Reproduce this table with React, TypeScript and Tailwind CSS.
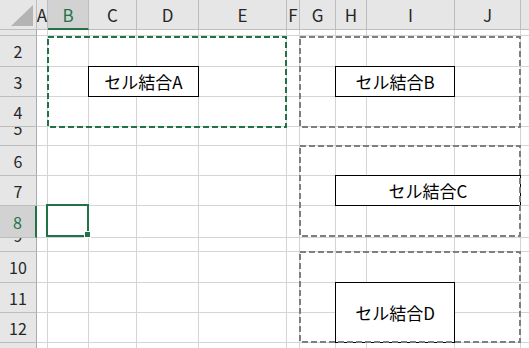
const font = "font-['Noto_Sans_CJK_JP',sans-serif]";

const columns = ["", "A", "B", "C", "D", "E", "F", "G", "H", "I", "J", ""];

// row number, label offset for rows that are too short to show the number
const rows: { n: number; label: string; offset?: string }[] = [
  { n: 1, label: "" },
  { n: 2, label: "2" },
  { n: 3, label: "3" },
  { n: 4, label: "4" },
  { n: 5, label: "5", offset: "-mt-[7px]" },
  { n: 6, label: "6" },
  { n: 7, label: "7" },
  { n: 8, label: "8" },
  { n: 9, label: "9", offset: "-mt-[11px]" },
  { n: 10, label: "10" },
  { n: 11, label: "11" },
  { n: 12, label: "12" },
  { n: 13, label: "13" }
];

type Merge = { row: number; col: number; rows: number; cols: number; text: string; span: string };

const merges: Merge[] = [
  { row: 3, col: 3, rows: 1, cols: 2, text: "セル結合A", span: "col-span-2" },
  { row: 3, col: 8, rows: 1, cols: 2, text: "セル結合B", span: "col-span-2" },
  { row: 7, col: 8, rows: 1, cols: 3, text: "セル結合C", span: "col-span-3" },
  { row: 11, col: 8, rows: 2, cols: 2, text: "セル結合D", span: "col-span-2 row-span-2" }
];

function mergeAt(row: number, col: number) {
  return merges.find((m) => m.row === row && m.col === col);
}

function covered(row: number, col: number) {
  return merges.some(
    (m) => row >= m.row && row < m.row + m.rows && col >= m.col && col < m.col + m.cols
  );
}

function HeaderRow() {
  return (
    <>
      <div className="relative border-b border-r border-[#bdbdbd] bg-[#e6e6e6]">
        <svg className="absolute left-0 top-0" width="36" height="29">
          <polygon points="33,5 33,26 11,26" fill="#b4b4b4" />
        </svg>
      </div>
      {columns.slice(1).map((c, i) => {
        const selected = c === "B";
        return (
          <div
            key={i}
            className={
              selected
                ? "flex items-center justify-center border-b-2 border-r border-b-[#217346] border-r-[#bdbdbd] bg-[#d2d2d2] text-[17px] text-[#217346]"
                : "flex items-center justify-center border-b border-r border-[#bdbdbd] bg-[#e6e6e6] text-[17px] text-[#262626]"
            }
          >
            <span className="leading-none">{c}</span>
          </div>
        );
      })}
    </>
  );
}

function RowHeader({ n, label, offset }: { n: number; label: string; offset?: string }) {
  const selected = n === 8;
  return (
    <div
      className={
        (selected
          ? "border-r-2 border-b border-r-[#217346] border-b-[#bdbdbd] bg-[#d2d2d2] text-[#217346] "
          : "border-b border-r border-b-[#bdbdbd] border-r-[#ababab] bg-[#e6e6e6] text-[#262626] ") +
        (offset ? "flex items-start justify-center overflow-hidden text-[16px]" : "flex items-center justify-center overflow-hidden text-[16px]")
      }
    >
      <span className={"leading-[16px] " + (offset ?? "")}>{label}</span>
    </div>
  );
}

function Cell({ row, col }: { row: number; col: number }) {
  const m = mergeAt(row, col);
  if (m) {
    return (
      <div
        className={`${m.span} relative z-10 -ml-px -mt-px flex items-center justify-center border border-black bg-white text-[17px] text-black`}
      >
        <span className="leading-none">{m.text}</span>
      </div>
    );
  }
  const active = row === 8 && col === 2;
  return (
    <div className="relative border-b border-r border-[#d4d4d4] bg-white">
      {active && (
        <>
          <div className="absolute -left-[2px] -right-px -top-[2px] bottom-0 z-10 border-2 border-[#217346]" />
          <div className="absolute -right-[2px] bottom-0 z-10 h-[5px] w-[5px] bg-[#217346] outline outline-1 outline-white" />
        </>
      )}
    </div>
  );
}

export default function App() {
  return (
    <div className={`relative h-[348px] w-[529px] overflow-hidden bg-white ${font}`}>
      <div className="grid grid-cols-[37px_11px_41px_48px_62px_88px_13px_36px_31px_88px_66px_40px] grid-rows-[30px_6px_31px_30px_30px_19px_30px_30px_32px_14px_31px_30px_30px_30px]">
        <HeaderRow />
        {rows.map((r) => (
          <div key={r.n} className="contents">
            <RowHeader n={r.n} label={r.label} offset={r.offset} />
            {columns.slice(1).map((_, ci) => {
              const col = ci + 1;
              if (covered(r.n, col) && !mergeAt(r.n, col)) return null;
              return <Cell key={col} row={r.n} col={col} />;
            })}
          </div>
        ))}
      </div>

      {/* copy / selection marquees */}
      <svg className="pointer-events-none absolute left-0 top-0 z-20" width="529" height="348">
        <rect x="48" y="37" width="238" height="90" fill="none" stroke="#217346" strokeWidth="2" strokeDasharray="6 3" />
        <rect x="300" y="37" width="220" height="90" fill="none" stroke="#7f7f7f" strokeWidth="2" strokeDasharray="6 3" />
        <rect x="300" y="146" width="220" height="90" fill="none" stroke="#7f7f7f" strokeWidth="2" strokeDasharray="6 3" />
        <rect x="300" y="252" width="220" height="90" fill="none" stroke="#7f7f7f" strokeWidth="2" strokeDasharray="6 3" />
      </svg>
    </div>
  );
}
